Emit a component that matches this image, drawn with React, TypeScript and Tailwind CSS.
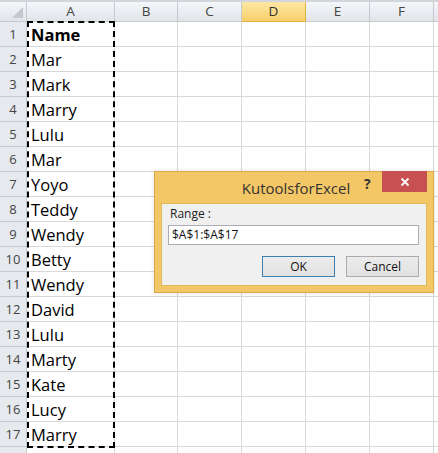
import React from "react";

const names = [
  "Name", "Mar", "Mark", "Marry", "Lulu", "Mar", "Yoyo", "Teddy", "Wendy",
  "Betty", "Wendy", "David", "Lulu", "Marty", "Kate", "Lucy", "Marry",
];

const cols = ["A", "B", "C", "D", "E", "F"];
const colW = ["w-[88px]", "w-[63px]", "w-[64px]", "w-[64px]", "w-[64px]", "w-[64px]"];

function HeaderRow() {
  return (
    <div className="flex h-[20px]">
      <div className="relative w-[27px] shrink-0 border-r border-b border-[#c5cad1] bg-gradient-to-b from-[#f4f6f9] to-[#e1e5ea]">
        <svg className="absolute right-[3px] bottom-[3px]" width="11" height="11" viewBox="0 0 11 11">
          <polygon points="11,0 11,11 0,11" fill="#c3c8d0" />
        </svg>
      </div>
      {cols.map((c, i) => (
        <div
          key={c}
          className={`${colW[i]} shrink-0 flex items-center justify-center border-r border-b text-[13.5px] ${
            c === "D"
              ? "border-[#e2b33f] bg-gradient-to-b from-[#fde7a4] to-[#f8cf6a] text-[#333]"
              : "border-[#c5cad1] bg-gradient-to-b from-[#f4f6f9] to-[#e1e5ea] text-[#444]"
          }`}
        >
          {c}
        </div>
      ))}
      <div className="flex-1 border-b border-[#c5cad1] bg-gradient-to-b from-[#f4f6f9] to-[#e1e5ea]"></div>
    </div>
  );
}

function Row({ n, name, showNum = true }: { n: number; name?: string; showNum?: boolean }) {
  return (
    <div className="flex h-[25px]">
      <div className="w-[27px] shrink-0 flex items-center justify-center border-r border-b border-[#c5cad1] bg-[#e6e9ee] text-[13px] text-[#444] pt-[2px]">
        {showNum ? n : null}
      </div>
      {cols.map((c, i) => (
        <div
          key={c}
          className={`${colW[i]} shrink-0 flex items-end border-r border-b border-[#d8d8d8] bg-white overflow-hidden whitespace-nowrap`}
        >
          {i === 0 && name ? (
            <span className={`pl-[4px] text-[16.5px] leading-[23px] text-black ${n === 1 ? "font-bold" : ""}`}>
              {name}
            </span>
          ) : null}
        </div>
      ))}
      <div className="flex-1 border-b border-[#d8d8d8] bg-white"></div>
    </div>
  );
}

function Dialog() {
  return (
    <div className="absolute left-[154px] top-[171px] w-[280px] h-[122px] border border-[#d9aa45] bg-[#f3c766] flex flex-col shadow-[0_0_5px_rgba(0,0,0,0.12)]">
      <div className="relative h-[31px] shrink-0 flex items-center justify-center">
        <span className="text-[15px] text-[#333] pt-[1px] pl-[4px]">KutoolsforExcel</span>
        <span className="absolute left-[209px] top-[1px] text-[14px] font-bold text-[#333]">?</span>
        <div className="absolute right-[6px] top-[-1px] w-[45px] h-[21px] bg-[#c75050] flex items-center justify-center">
          <svg width="10" height="10" viewBox="0 0 10 10">
            <path d="M1.5 1.5 L8.5 8.5 M8.5 1.5 L1.5 8.5" stroke="#ffffff" strokeWidth="1.8" />
          </svg>
        </div>
      </div>
      <div className="mx-[6px] mb-[6px] flex-1 border border-[#e0b95c] bg-[#f0f0f0] flex flex-col px-[6px] pt-[2px]">
        <div className="text-[12px] text-[#1e1e1e] pl-[2px] leading-[15px]">Range :</div>
        <div className="mt-[4px] h-[20px] mr-[1px] border border-[#abadb3] bg-white flex items-center pl-[3px] text-[12px] text-[#111]">
          $A$1:$A$17
        </div>
        <div className="mt-[11px] flex justify-end gap-[11px] mr-[1px]">
          <button className="w-[73px] h-[21px] border border-[#3c7fb1] bg-gradient-to-b from-[#ececec] to-[#e1e1e1] text-[12px] text-[#111] flex items-center justify-center">
            OK
          </button>
          <button className="w-[73px] h-[21px] border border-[#acacac] bg-gradient-to-b from-[#ececec] to-[#e1e1e1] text-[12px] text-[#111] flex items-center justify-center">
            Cancel
          </button>
        </div>
      </div>
    </div>
  );
}

export default function App() {
  return (
    <div className="relative w-[438px] h-[453px] overflow-hidden bg-white" style={{ fontFamily: '"Open Sans", "Liberation Sans", sans-serif' }}>
      <div className="h-[2px] bg-[#d2d6dc]"></div>
      <HeaderRow />
      {names.map((nm, i) => (
        <Row key={i} n={i + 1} name={nm} />
      ))}
      <Row n={18} showNum={false} />
      <div className="absolute left-[27px] top-[21px] w-[88px] h-[427px] border-2 border-dashed border-black pointer-events-none"></div>
      <Dialog />
    </div>
  );
}
